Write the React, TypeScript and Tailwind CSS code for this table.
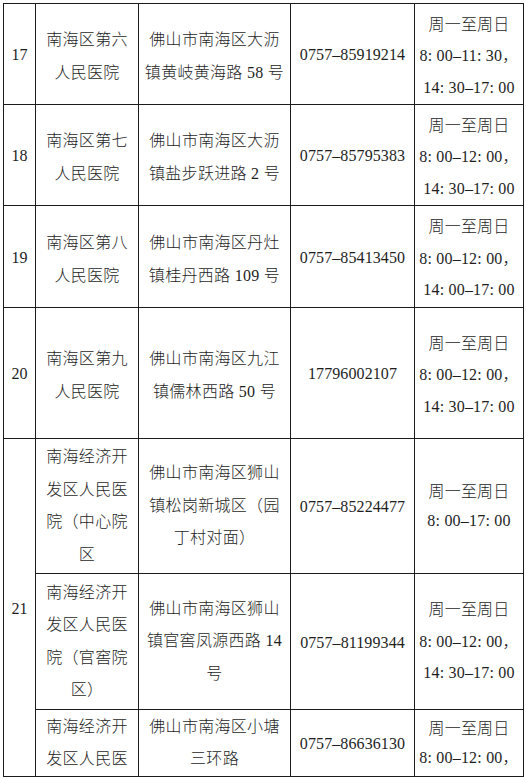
import React from "react";

type Row = {
  num?: string;
  numSpan?: number;
  h: number;
  tight?: boolean;
  name: string[];
  addr: string[];
  phone: string;
  time: string[];
};

const rows: Row[] = [
  {
    num: "17",
    h: 101,
    name: ["南海区第六", "人民医院"],
    addr: ["佛山市南海区大沥", "镇黄岐黄海路 58 号"],
    phone: "0757–85919214",
    time: ["周一至周日", "8: 00–11: 30，", "14: 30–17: 00"],
  },
  {
    num: "18",
    h: 101,
    name: ["南海区第七", "人民医院"],
    addr: ["佛山市南海区大沥", "镇盐步跃进路 2 号"],
    phone: "0757–85795383",
    time: ["周一至周日", "8: 00–12: 00，", "14: 30–17: 00"],
  },
  {
    num: "19",
    h: 102,
    name: ["南海区第八", "人民医院"],
    addr: ["佛山市南海区丹灶", "镇桂丹西路 109 号"],
    phone: "0757–85413450",
    time: ["周一至周日", "8: 00–12: 00，", "14: 00–17: 00"],
  },
  {
    num: "20",
    h: 131,
    name: ["南海区第九", "人民医院"],
    addr: ["佛山市南海区九江", "镇儒林西路 50 号"],
    phone: "17796002107",
    time: ["周一至周日", "8: 00–12: 00，", "14: 30–17: 00"],
  },
  {
    num: "21",
    numSpan: 3,
    h: 135,
    tight: true,
    name: ["南海经济开", "发区人民医", "院（中心院", "区"],
    addr: ["佛山市南海区狮山", "镇松岗新城区（园", "丁村对面）"],
    phone: "0757–85224477",
    time: ["周一至周日", "8: 00–17: 00"],
  },
  {
    h: 136,
    tight: true,
    name: ["南海经济开", "发区人民医", "院（官窖院", "区）"],
    addr: ["佛山市南海区狮山", "镇官窖凤源西路 14", "号"],
    phone: "0757–81199344",
    time: ["周一至周日", "8: 00–12: 00，", "14: 30–17: 00"],
  },
  {
    h: 67,
    tight: true,
    name: ["南海经济开", "发区人民医"],
    addr: ["佛山市南海区小塘", "三环路"],
    phone: "0757–86636130",
    time: ["周一至周日", "8: 00–12: 00，"],
  },
];

const cell = "border border-[#1c1c1c] text-center align-middle p-0";

export default function App() {
  return (
    <div
      className="h-[779px] w-[526px] overflow-hidden bg-white pl-[3px] pt-[3px] text-[16px] text-[#1e1e1e]"
      style={{ fontFamily: '"Liberation Serif", "Noto Sans CJK SC", serif' }}
    >
      <table className="table-fixed border-collapse">
        <colgroup>
          <col className="w-[32px]" />
          <col className="w-[103px]" />
          <col className="w-[152px]" />
          <col className="w-[124px]" />
          <col className="w-[109px]" />
        </colgroup>
        <tbody>
          {rows.map((r, i) => (
            <tr key={i} style={{ height: r.h }}>
              {r.num !== undefined && (
                <td rowSpan={r.numSpan ?? 1} className={`${cell} pt-[2px]`}>
                  {r.num}
                </td>
              )}
              <td
                className={`${cell} ${r.tight ? "pt-0 leading-[32.5px]" : "pt-[4px] leading-[33px]"} tracking-[0.3px]`}
              >
                {r.name.map((l, j) => (
                  <div key={j} className="font-light">{l}</div>
                ))}
              </td>
              <td
                className={`${cell} ${r.tight ? "pt-0 leading-[32.5px]" : "pt-[4px] leading-[33px]"} tracking-[0.3px]`}
              >
                {r.addr.map((l, j) => (
                  <div key={j} className="font-light whitespace-nowrap">{l}</div>
                ))}
              </td>
              <td className={`${cell} pt-[2px] tracking-[0.1px] whitespace-nowrap`}>{r.phone}</td>
              <td
                className={`${cell} ${r.tight ? "pt-0" : "pt-[4px]"} tracking-[0.2px] ${
                  r.time.length === 3 ? "leading-[31.5px]" : "leading-[29px]"
                }`}
              >
                {r.time.map((l, j) => (
                  <div key={j} className="font-light whitespace-nowrap">{l}</div>
                ))}
              </td>
            </tr>
          ))}
        </tbody>
      </table>
    </div>
  );
}
